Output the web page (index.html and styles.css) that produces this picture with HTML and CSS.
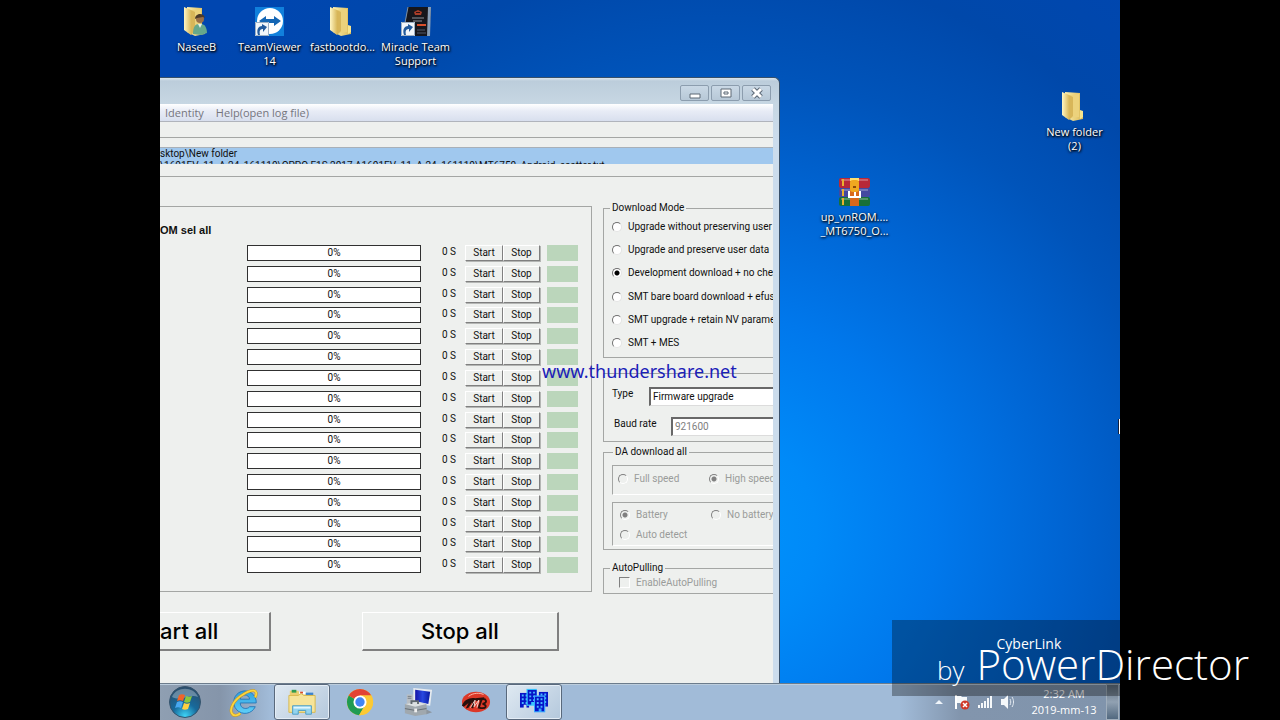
FILE: index.html
```html
<!DOCTYPE html>
<html lang="en">
<head>
<meta charset="utf-8">
<title>Desktop</title>
<link rel="stylesheet" href="styles.css">
</head>
<body>
<svg class="defs" aria-hidden="true">
  <defs>
    <linearGradient id="fold" x1="0" x2="1"><stop offset="0" stop-color="#f9eeb0"/><stop offset="1" stop-color="#dcb954"/></linearGradient>
    <linearGradient id="flap" x1="0" x2="1"><stop offset="0" stop-color="#fff6c4"/><stop offset="1" stop-color="#d9b95c"/></linearGradient>
    <radialGradient id="orb" cx=".5" cy=".95" r=".9"><stop offset="0" stop-color="#3ed4f6"/><stop offset=".45" stop-color="#176a9c"/><stop offset="1" stop-color="#2b4f6e"/></radialGradient>
    <linearGradient id="ie" x1="0" x2="0" y1="0" y2="1"><stop offset="0" stop-color="#2f9fe0"/><stop offset="1" stop-color="#5fd0f8"/></linearGradient>
    <linearGradient id="screen" x1="0" x2="1"><stop offset="0" stop-color="#1414a8"/><stop offset=".5" stop-color="#2848e0"/><stop offset="1" stop-color="#0818a0"/></linearGradient>
    <symbol id="folder" viewBox="4 1 32 32">
      <path d="M10 2l15 1v22l3-2v6l-10 2-8-4z" fill="url(#fold)"/>
      <path d="M15 5l9-1v23l-9 1z" fill="#ecd27c"/>
      <path d="M7 2l7 3v25l-7-5z" fill="url(#flap)"/>
      <path d="M14 5l4 2v19l-4 4z" fill="#d8b659"/>
      <path d="M25 20l3 1v6l-3 2z" fill="#f7e58e"/>
    </symbol>
    <symbol id="shortcut" viewBox="0 0 14 14">
      <path d="M0 0h14v14H0z" fill="#f2f6fa"/><path d="M.5.5h13v13H.5z" fill="none" stroke="#9db0c4"/>
      <path d="M3 13C1 7 4 4 7 4V2l5 3-4 5V7c-3 0-4 2-3 6z" fill="#225a9c"/>
    </symbol>
    <symbol id="tower" viewBox="0 0 10 16">
      <path d="M0 0h10v16H7v-3H4v3H0z" fill="#0614c8"/>
      <path d="M2 2h2v2H2zM6 2h2v2H6zM2 6h2v2H2zM6 6h2v2H6zM2 10h2v2H2zM6 10h2v2H6z" fill="#49b4ff"/>
    </symbol>
  </defs>
</svg>

<main class="desktop">
  <div class="icon-row">
    <div class="icon">
      <svg viewBox="0 0 32 32"><use href="#folder" width="32" height="32"/><circle cx="19" cy="13" r="4" fill="#9a7048"/><path d="M14 13c0-6 9-7 10-1l-2-1-6 1z" fill="#4b3a2a"/><path d="M12 28c0-7 2-10 6-10 5-1 8 3 8 9l-6 2z" fill="#66a88c"/><path d="M17 18l2 4 2-4z" fill="#e8f0e8"/></svg>
      <span>NaseeB</span>
    </div>
    <div class="icon">
      <svg viewBox="0 0 32 32"><path d="M1 1h29v29H1z" fill="#1180dc"/><circle cx="16" cy="15" r="13" fill="#fff"/><path d="M5 15l7-5v3h8v-3l7 5-7 5v-3h-8v3z" fill="#1466b4"/><use href="#shortcut" x="1" y="16" width="14" height="14"/></svg>
      <span>TeamViewer 14</span>
    </div>
    <div class="icon">
      <svg viewBox="0 0 32 32"><use href="#folder" width="32" height="32"/></svg>
      <span>fastbootdo...</span>
    </div>
    <div class="icon">
      <svg viewBox="0 0 32 32"><path d="M8 1h23l-2 29H3z" fill="#16161c"/><path d="M28 1h3l-1 29h-3z" fill="#8aa0b8"/><path d="M8 1L4 22" stroke="#8090a0"/><path d="M14 6l4-2 4 2-1 3h-6z" fill="#a83c28"/><path d="M16 6h4v1h-4z" fill="#301010"/><path d="M12 12h12M13 15h9" stroke="#8c9098"/><path d="M17 19h9" stroke="#d8502c" stroke-width="2"/><path d="M17 24h8M17 27h9" stroke="#50586a"/><use href="#shortcut" x="1" y="16" width="14" height="14"/></svg>
      <span>Miracle Team Support</span>
    </div>
  </div>

  <div class="icon pin-folder">
    <svg viewBox="0 0 32 32"><use href="#folder" width="32" height="32"/></svg>
    <span>New folder (2)</span>
  </div>
  <div class="icon pin-archive">
    <svg viewBox="0 0 32 32"><rect x="0" y="2" width="31" height="10" rx="2" fill="#b82838"/><rect x="0" y="12" width="31" height="9" rx="2" fill="#4448a0"/><rect x="0" y="21" width="31" height="9" rx="2" fill="#187038"/><path d="M2 4h27M2 14h27M2 23h27" stroke="#fff" stroke-opacity=".25" stroke-width="2"/><path d="M4 3v7M4 13v7M4 22v7" stroke="#e8b030" stroke-width="2"/><path d="M11 2h9v28h-9z" fill="#d8681c"/><path d="M11 2h9v3h-9z" fill="#ffe070"/><rect x="11" y="4" width="9" height="12" rx="3" fill="#f0a820"/><path d="M14 11h3" stroke="#8c4c08" stroke-width="2"/><path d="M10 15v6h11v-6M16 16v4" fill="none" stroke="#fff" stroke-width="2"/></svg>
    <span>up_vnROM.... _MT6750_O...</span>
  </div>
  <i class="pointer"></i>

  <section class="window">
    <header class="titlebar">
      <button aria-label="Minimize"><svg viewBox="0 0 27 14"><path d="M9 8h10v4H9z" fill="#fff" stroke="#5c6875"/></svg></button>
      <button aria-label="Maximize"><svg viewBox="0 0 27 14"><path d="M9 3h10v8H9z" fill="#fff" stroke="#5c6875"/><path d="M12 6h4v2h-4z" fill="none" stroke="#5c6875"/></svg></button>
      <button aria-label="Close"><svg viewBox="0 0 27 14"><path d="M10 3l8 8M18 3l-8 8" stroke="#5c6875" stroke-width="5"/><path d="M10 3l8 8M18 3l-8 8" stroke="#fff" stroke-width="3"/></svg></button>
    </header>
    <nav class="menubar"><a href="#">Identity</a><a href="#">Help(open log file)</a></nav>
    <div class="client">
      <div class="strip"></div>
      <div class="paths"><p>sktop\New folder</p><p>\1601EV_11_A.24_161110\OPPO F1S 2017 A1601EV_11_A.24_161110\MT6750_Android_scatter.txt</p></div>
      <div class="panels">
        <section class="ports">
          <h2>OM sel all</h2>
          <div class="rows">
            <div class="row"><div class="bar">0%</div><span>0 S</span><button>Start</button><button>Stop</button><i></i></div>
            <div class="row"><div class="bar">0%</div><span>0 S</span><button>Start</button><button>Stop</button><i></i></div>
            <div class="row"><div class="bar">0%</div><span>0 S</span><button>Start</button><button>Stop</button><i></i></div>
            <div class="row"><div class="bar">0%</div><span>0 S</span><button>Start</button><button>Stop</button><i></i></div>
            <div class="row"><div class="bar">0%</div><span>0 S</span><button>Start</button><button>Stop</button><i></i></div>
            <div class="row"><div class="bar">0%</div><span>0 S</span><button>Start</button><button>Stop</button><i></i></div>
            <div class="row"><div class="bar">0%</div><span>0 S</span><button>Start</button><button>Stop</button><i></i></div>
            <div class="row"><div class="bar">0%</div><span>0 S</span><button>Start</button><button>Stop</button><i></i></div>
            <div class="row"><div class="bar">0%</div><span>0 S</span><button>Start</button><button>Stop</button><i></i></div>
            <div class="row"><div class="bar">0%</div><span>0 S</span><button>Start</button><button>Stop</button><i></i></div>
            <div class="row"><div class="bar">0%</div><span>0 S</span><button>Start</button><button>Stop</button><i></i></div>
            <div class="row"><div class="bar">0%</div><span>0 S</span><button>Start</button><button>Stop</button><i></i></div>
            <div class="row"><div class="bar">0%</div><span>0 S</span><button>Start</button><button>Stop</button><i></i></div>
            <div class="row"><div class="bar">0%</div><span>0 S</span><button>Start</button><button>Stop</button><i></i></div>
            <div class="row"><div class="bar">0%</div><span>0 S</span><button>Start</button><button>Stop</button><i></i></div>
            <div class="row"><div class="bar">0%</div><span>0 S</span><button>Start</button><button>Stop</button><i></i></div>
          </div>
        </section>
        <form class="options">
          <fieldset class="modes">
            <legend>Download Mode</legend>
            <div class="mode-list">
              <label><input type="radio" name="mode">Upgrade without preserving user</label>
              <label><input type="radio" name="mode">Upgrade and preserve user data</label>
              <label><input type="radio" name="mode" checked>Development download + no check</label>
              <label><input type="radio" name="mode">SMT bare board download + efuse</label>
              <label><input type="radio" name="mode">SMT upgrade + retain NV parameters</label>
              <label><input type="radio" name="mode">SMT + MES</label>
            </div>
          </fieldset>
          <fieldset class="connection">
            <div class="field type"><label for="type">Type</label><select id="type"><option>Firmware upgrade</option></select></div>
            <div class="field baud"><label for="baud">Baud rate</label><select id="baud" disabled><option>921600</option></select></div>
          </fieldset>
          <fieldset class="da">
            <legend>DA download all</legend>
            <div class="inset speed">
              <label><input type="radio" name="speed" disabled>Full speed</label>
              <label><input type="radio" name="speed" checked disabled>High speed</label>
            </div>
            <div class="inset power">
              <label><input type="radio" name="power" checked disabled>Battery</label>
              <label><input type="radio" name="power" disabled>No battery</label>
              <label><input type="radio" name="power" disabled>Auto detect</label>
            </div>
          </fieldset>
          <fieldset class="auto">
            <legend>AutoPulling</legend>
            <label><input type="checkbox" disabled>EnableAutoPulling</label>
          </fieldset>
        </form>
      </div>
      <div class="actions"><button class="start-all">art all</button><button class="stop-all">Stop all</button></div>
    </div>
  </section>

  <footer class="taskbar">
    <div class="apps">
      <button class="start" aria-label="Start"><svg viewBox="0 0 32 32"><circle cx="16" cy="16" r="15.500" fill="url(#orb)" stroke="#35536c"/><path d="M3 11c4-11 22-11 26 0-8-4-16 5-26 0z" fill="#fff" opacity=".3"/><path d="M10 9c2-1 4-1 6 0l-2 6c-2-1-4-1-6 0z" fill="#f06428"/><path d="M17 10c2 1 4 1 6 0l-2 6c-2 1-4 1-6 0z" fill="#8cc83c"/><path d="M8 16c2-1 4-1 6 0l-2 6c-2-1-4-1-6 0z" fill="#48a8f0"/><path d="M15 17c2 1 4 1 6 0l-2 6c-2 1-4 1-6 0z" fill="#ffd040"/></svg></button>
      <button aria-label="Internet Explorer"><svg viewBox="0 0 32 32"><path d="M28 21A12 12 0 1 1 29 17H12c0 7 8 7 10 4zM12 13h10c-1-6-9-6-10 0z" fill="url(#ie)" stroke="#2878b8"/><path d="M28 11c4-9-4-9-13-3C6 13 0 23 3 28c2 4 7 2 9 0" fill="none" stroke="#c89820" stroke-width="3"/><path d="M28 11c4-9-4-9-13-3C6 13 0 23 3 28c2 4 7 2 9 0" fill="none" stroke="#fad440" stroke-width="2"/></svg></button>
      <button class="open" aria-label="Explorer"><svg viewBox="0 0 32 32"><path d="M3 4h9l2 3h14v20H3z" fill="#eccf72"/><path d="M5 3h5v3H5z" fill="#309c50"/><path d="M13 5h7v3h-7z" fill="#fff"/><path d="M14 5h3v2h-3z" fill="#d84828"/><path d="M20 6h8v3h-8z" fill="#3c84d0"/><path d="M2 9h10l3-2 3 2h12v18H2z" fill="#f6e49a" stroke="#d8b84c"/><path d="M6 20h20v9h-6v-4h-8v4H6z" fill="#94d4ee" stroke="#4a9cc4"/><path d="M7 21h18v2H7z" fill="#dff6ff"/></svg></button>
      <button aria-label="Chrome"><svg viewBox="0 0 32 32"><circle cx="16" cy="16" r="14" fill="#fcc934"/><path d="M16 16L4 9a14 14 0 0 0 11 21l7-12z" fill="#1f9b52"/><path d="M16 16L4 9a14 14 0 0 1 24 0H16z" fill="#e24334"/><path d="M16 9h12a14 14 0 0 1-13 21l7-11z" fill="#fcc934"/><circle cx="16" cy="16" r="7" fill="#fff"/><circle cx="16" cy="16" r="5" fill="#4285f4"/></svg></button>
      <button aria-label="Computer tools"><svg viewBox="0 0 32 32"><path d="M4 8h7v11H4z" fill="#b8bec4"/><path d="M5 10h4M5 12h4" stroke="#737b83"/><path d="M11 1l20 2-2 17-18-3z" fill="#e6ebef"/><path d="M13 3l16 2-2 13-14-3z" fill="url(#screen)"/><path d="M18 20l7 1v3l6 3-6 2-8-4z" fill="#8c959e"/><path d="M2 18l13-2 10 2v11l-12 2-11-3z" fill="#a0a8ae"/><path d="M2 18l13-2 10 2-12 3z" fill="#dce0e2"/><path d="M9 18v-3h7v3" fill="none" stroke="#60686f" stroke-width="2"/><path d="M2 23l11 2 12-2" stroke="#646c72" fill="none"/><path d="M12 23h3v4h-3z" fill="#eee"/></svg></button>
      <button aria-label="Miracle Box"><svg viewBox="0 0 32 32"><ellipse cx="16" cy="16" rx="15" ry="11" fill="#dc3828"/><path d="M8 10c5-4 12-4 16-2" stroke="#ffc0b0" fill="none"/><path d="M1 20c2-6 8-9 14-8l10-1-2 3-8 1-2 8-2-1 1-6-4 6-3 1 3-6-5 4z" fill="#28100c"/><path d="M22 13l-3 9c9 2 9-3 4-4 6-1 4-6-1-5" fill="none" stroke="#28100c" stroke-width="2"/><path d="M10 22l5-8-1 7 5-7-2 8" stroke="#f8d8d0" fill="none"/></svg></button>
      <button class="open" aria-label="Download tool"><svg viewBox="0 0 32 32"><use href="#tower" x="1" y="6" width="10" height="16"/><use href="#tower" x="21" y="5" width="10" height="16"/><path d="M8 2h11v18H8z" fill="#38c8ff"/><use href="#tower" x="9" y="3" width="10" height="16"/><path d="M16 9h12v18H16z" fill="#38a8ff"/><use href="#tower" x="17" y="10" width="10" height="16"/></svg></button>
    </div>
    <div class="tray">
      <svg class="arrow" viewBox="0 0 8 4"><path d="M0 4l4-4 4 4z" fill="#eef4fa"/></svg>
      <svg viewBox="0 0 16 16"><path d="M2 1v14" stroke="#fff" stroke-width="2"/><path d="M3 2h4l1 1h5v7H7L6 9H3z" fill="#f5f8fa"/><circle cx="11" cy="11" r="4.500" fill="#d03828"/><path d="M9 9l4 4M13 9l-4 4" stroke="#fff" stroke-width="1.500"/></svg>
      <svg viewBox="0 0 16 16"><path d="M1 11h2v3H1zM4 9h2v5H4zM7 7h2v7H7zM10 4h2v10h-2zM13 2h2v12h-2z" fill="#f5f8fa"/></svg>
      <svg viewBox="0 0 16 16"><path d="M1 5h3l4-4v14l-4-4H1z" fill="#f5f8fa"/><path d="M10 5c1 2 1 4 0 6M12 3c2 3 2 7 0 10" fill="none" stroke="#e4ebf2"/></svg>
      <time><span>2:32 AM</span><span>2019-mm-13</span></time>
      <button class="peek" aria-label="Show desktop"></button>
    </div>
  </footer>

  <p class="url-mark">www.thundershare.net</p>
</main>

<aside class="credit">
  <span class="by">by</span>
  <span class="brand"><small>CyberLink</small>PowerDirector</span>
</aside>
</body>
</html>
```

FILE: styles.css
```css
* { box-sizing: border-box; }

body {
  margin: 0;
  min-height: 100vh;
  background: #000;
  position: relative;
  overflow: hidden;
  font: 11px/14px "Open Sans", "Noto Sans", sans-serif;
}

p, h2 { margin: 0; }
button { padding: 0; font: inherit; color: inherit; }
.defs { position: absolute; width: 0; height: 0; }

.desktop {
  position: relative;
  display: flex;
  flex-direction: column;
  justify-content: space-between;
  height: 100vh;
  margin: 0 12.5%;
  overflow: hidden;
  background: radial-gradient(circle at 58% 74%, #0094fc 0, #008af8 100px, #0078ec 220px, #0064d2 350px, #0054ba 460px, #0048aa 570px, #0046b0 700px);
}

/* Desktop icons */
.icon-row { display: flex; padding-top: 6px; }
.icon {
  width: 73px;
  display: flex;
  flex-direction: column;
  align-items: center;
  gap: 2px;
  color: #fff;
  text-align: center;
  text-shadow: 1px 1px 2px #000, 0 1px 3px #000;
}
.icon svg { width: 32px; height: 32px; }
.pin-folder { position: absolute; right: 9px; top: 91px; }
.pin-folder span { width: 60px; }
.pin-archive { position: absolute; right: 229px; top: 176px; }
.pointer {
  position: absolute;
  right: 0;
  top: 419px;
  width: 2px;
  height: 15px;
  background: #fff;
  border-left: 1px solid #102040;
}

/* Application window */
.window {
  position: absolute;
  left: 0;
  right: 340px;
  top: 77px;
  bottom: 37px;
  display: flex;
  flex-direction: column;
  padding-right: 6px;
  border: 1px solid #37506a;
  border-width: 1px 1px 0 0;
  border-radius: 0 6px 0 0;
  background: linear-gradient(#dbe6ee 0, #bccddb 3px, #c7d7e3 26px, #cbdcec 60px, #cbdcec 100%);
}
.titlebar {
  display: flex;
  justify-content: flex-end;
  gap: 2px;
  height: 26px;
  padding: 7px 2px 3px 0;
}
.titlebar button {
  width: 29px;
  height: 16px;
  border: 1px solid #8c9dae;
  border-radius: 2px;
  background: linear-gradient(#c9d8e5, #b7c8d7);
}
.titlebar svg { display: block; width: 27px; height: 14px; }
.menubar {
  display: flex;
  gap: 12px;
  height: 18px;
  padding: 2px 5px;
  border-bottom: 1px solid #b0b4bc;
  background: linear-gradient(#fff, #e8ecf6 7px, #d8dfee);
}
.menubar a { color: #75757d; text-decoration: none; }

.client {
  flex: 1;
  overflow: hidden;
  background: #eef0ee;
  color: #101010;
  font: 11px/14px Roboto, "Liberation Sans", sans-serif;
}
.strip { height: 16px; border-bottom: 1px solid #a4a6a4; }
.paths {
  height: 17px;
  margin: 9px 0 12px;
  overflow: hidden;
  background: #a0c8ee;
  border-top: 1px solid #a8b0b8;
  font-size: 10px;
  line-height: 12px;
  white-space: nowrap;
}
.panels {
  display: flex;
  gap: 11px;
  border-top: 1px solid #a4a6a4;
}
.ports {
  flex: 1;
  min-width: 0;
  margin-top: 29px;
  margin-bottom: 2px;
  padding: 15px 13px 13px 0;
  border: 1px solid #a4a6a4;
  border-left: 0;
}
.ports h2 { font: bold 11px/16px "Liberation Sans", sans-serif; margin-bottom: 7px; }
.rows {
  display: grid;
  grid-template-rows: repeat(16, 1fr);
  height: 333px;
  margin-left: 87px;
  font-size: 10px;
}
.row {
  display: grid;
  grid-template-columns: 1fr 44px 38px 37px 38px;
  align-items: start;
}
.row span { padding-left: 21px; white-space: nowrap; }
.bar {
  height: 16px;
  border: 1px solid #303030;
  background: #fff;
  line-height: 14px;
  text-align: center;
}
.row button {
  height: 16px;
  border: 1px solid;
  border-color: #fff #808080 #808080 #fff;
  background: #eef0ee;
  box-shadow: 1px 1px 0 #b4b6b4;
  line-height: 14px;
}
.row i { height: 16px; margin-left: 7px; background: #bbd6bb; }

/* Option groups run past the window's right edge */
.options {
  width: 170px;
  padding-top: 24px;
  overflow: hidden;
  font-size: 10px;
}
fieldset {
  min-width: 0;
  margin: 0;
  padding: 0;
  border: 1px solid #a4a6a4;
  border-right: 0;
}
legend { padding: 0 2px; height: 14px; }
.options label { display: flex; align-items: center; white-space: nowrap; }
input[type="radio"], input[type="checkbox"] {
  appearance: none;
  flex: none;
  width: 10px;
  height: 10px;
  margin: 0 6px 0 0;
  border: 1px solid;
  border-color: #707070 #e4e4e4 #e4e4e4 #707070;
  background: #fff;
}
input[type="radio"] { border-radius: 5px; }
input[type="radio"]:checked { background: radial-gradient(circle, #000 0, #000 2px, #fff 3px); }
input:disabled { background: #eef0ee; border-color: #808080 #fff #fff #808080; }
input[type="radio"]:checked:disabled { background: radial-gradient(circle, #808080 0, #808080 2px, #eef0ee 3px); }
label:has(input:disabled) { color: #9a9c9a; }

.modes { padding: 0 0 2px 8px; }
.modes legend { margin-left: -2px; }
.mode-list { display: grid; grid-template-rows: repeat(6, 1fr); height: 140px; }
.connection { margin-top: 15px; padding: 13px 0 5px 8px; }
.field { display: flex; height: 19px; }
.field label { height: 14px; }
.type label { width: 37px; }
.baud { margin-top: 11px; }
.baud label { width: 59px; padding-left: 2px; }
select {
  appearance: none;
  flex: 1;
  height: 19px;
  padding: 0 0 0 2px;
  border: 1px solid;
  border-color: #686868 transparent #dcdcdc #686868;
  border-width: 2px 0 1px 2px;
  border-radius: 0;
  background: #fff;
  color: #101010;
  font: inherit;
}
select:disabled { color: #808080; opacity: 1; }
.da { margin-top: 3px; padding: 6px 0 3px 8px; }
.da legend { margin-left: 1px; }
.inset {
  display: grid;
  grid-template-columns: 91px 91px;
  border: 1px solid #a4a6a4;
  border-width: 1px 0 1px 1px;
  border-bottom-color: #fff;
  color: #9a9c9a;
}
.speed { height: 30px; padding: 0 0 2px 5px; align-items: center; }
.power { height: 44px; margin-top: 7px; padding-left: 7px; padding-top: 2px; }
.auto { margin-top: 11px; padding: 0 0 3px 15px; }
.auto legend { margin-left: -9px; }
.auto label { height: 15px; }
.auto input { width: 11px; height: 11px; }

.actions { display: flex; gap: 91px; margin-top: 18px; }
.actions button {
  height: 39px;
  border: 1px solid;
  border-color: #fff #808080 #808080 #fff;
  border-width: 1px 2px 2px 1px;
  background: #eef0ee;
  color: #000;
  font: 500 22px/34px Inter, "Liberation Sans", sans-serif;
}
.actions .start-all { width: 111px; border-left: 0; text-align: left; }
.stop-all { width: 197px; }

/* Taskbar */
.taskbar {
  position: relative;
  display: flex;
  justify-content: space-between;
  height: 37px;
  border-top: 1px solid #6c7c8c;
  background: linear-gradient(90deg, #8f9fb2 0, #8595aa 60px, #a1bbd8 110px, #a1bbd8 740px, #8295ad 800px, #8094ac 100%);
  box-shadow: inset 0 1px 0 #bccddd;
}
.apps { display: flex; gap: 2px; }
.apps button {
  width: 56px;
  height: 36px;
  border: 1px solid transparent;
  border-radius: 3px;
  background: none;
}
.apps .start { width: 50px; margin-right: 4px; }
.apps svg { display: block; width: 30px; height: 30px; margin: auto; }
.apps .start svg { width: 32px; height: 32px; }
.apps .open {
  border-color: #59697c;
  background: linear-gradient(135deg, #dfe9f2, #b4c8dc);
  box-shadow: inset 0 0 0 1px #e4edf6;
}
.tray { display: flex; align-items: center; gap: 7px; color: #fff; }
.tray svg { width: 16px; height: 16px; }
.tray .arrow { width: 8px; height: 4px; margin-right: 4px; }
.tray time {
  width: 76px;
  margin-left: 3px;
  margin-right: -3px;
  line-height: 16px;
  text-align: center;
}
.tray span { display: block; }
.peek {
  width: 13px;
  height: 36px;
  margin-right: 1px;
  border: 1px solid #a0aebc;
  background: linear-gradient(#5f6f80, #91a1b2 50%, #51687f);
}

/* Overlaid marks */
.url-mark {
  position: absolute;
  left: 382px;
  top: 358px;
  color: #1a20b8;
  font: 18px/26px "Noto Sans", sans-serif;
}
.credit {
  position: absolute;
  right: 0;
  bottom: 24px;
  width: 388px;
  height: 76px;
  display: flex;
  align-items: baseline;
  justify-content: flex-end;
  gap: 12px;
  padding: 14px 31px 0 0;
  background: rgba(0, 0, 0, .32);
  color: #fff;
  font: 300 42px/60px "Open Sans", "Noto Sans", sans-serif;
}
.by { font-size: 26px; }
.brand { position: relative; }
.brand small {
  position: absolute;
  left: 20px;
  top: 0;
  font: 400 14px/20px "Open Sans", sans-serif;
}
```
